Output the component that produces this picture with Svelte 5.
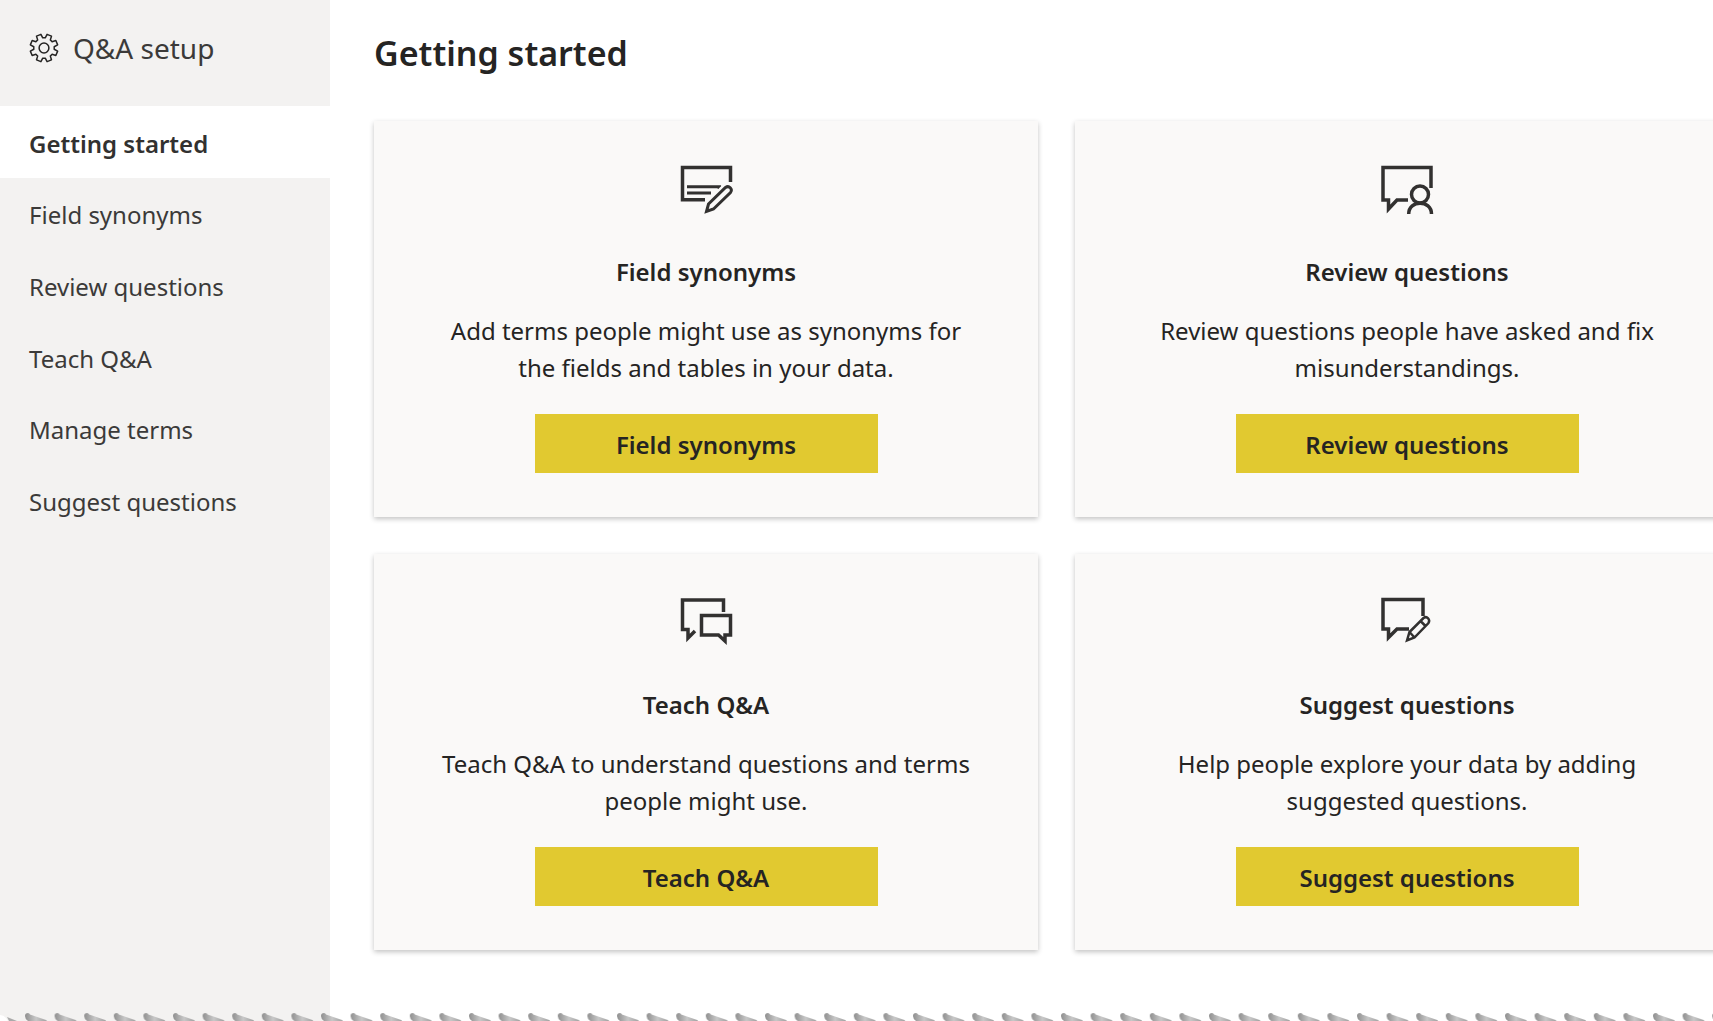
<script>
  const nav = [
    'Getting started',
    'Field synonyms',
    'Review questions',
    'Teach Q&A',
    'Manage terms',
    'Suggest questions'
  ];
  let current = $state('Getting started');

  const cards = [
    { icon: 'fields', title: 'Field synonyms', text: 'Add terms people might use as synonyms for the fields and tables in your data.' },
    { icon: 'review', title: 'Review questions', text: 'Review questions people have asked and fix misunderstandings.' },
    { icon: 'teach', title: 'Teach Q&A', text: 'Teach Q&A to understand questions and terms people might use.' },
    { icon: 'suggest', title: 'Suggest questions', text: 'Help people explore your data by adding suggested questions.' }
  ];

  // Outline of the eight-toothed settings gear, centred on 15,15.
  const gear = (() => {
    const pts = [];
    for (let i = 0; i < 8; i++) {
      const mid = (i * 45 + 22.5) * (Math.PI / 180);
      for (const [offset, r] of [[-0.27, 10.3], [-0.17, 14], [0.17, 14], [0.27, 10.3]]) {
        pts.push(`${(15 + r * Math.cos(mid + offset)).toFixed(2)},${(15 + r * Math.sin(mid + offset)).toFixed(2)}`);
      }
    }
    return pts.join(' ');
  })();
</script>

<div class="page">
  <aside>
    <div class="brand">
      <svg viewBox="0 0 30 30" width="30" height="30" aria-hidden="true">
        <polygon points={gear} />
        <circle cx="15" cy="15" r="4.9" />
      </svg>
      <span>Q&amp;A setup</span>
    </div>
    <nav aria-label="Q&A setup">
      {#each nav as item}
        <a
          href="#{item.toLowerCase().replaceAll(' ', '-')}"
          class:active={item === current}
          aria-current={item === current ? 'page' : undefined}
          onclick={() => (current = item)}>{item}</a>
      {/each}
    </nav>
  </aside>

  <main>
    <h1>Getting started</h1>
    <div class="cards">
      {#each cards as card}
        <section class="card">
          <svg class="icon" viewBox="0 0 54 54" width="54" height="54" aria-hidden="true">
            {#if card.icon === 'fields'}
              <path d="M26 37.700H3.500V5.500H51.500V20" />
              <path d="M8 24.700H42L38.500 26.200M8 31H32" class="line" />
              <path class="gap" d="M27.500 49.500l2-7.500L46.500 25.500c3.500-2.500 7.500 1.500 5 5L34.500 47z" />
              <path class="pen" d="M27.500 49.500l2-7.500L46.500 25.500c3.500-2.500 7.500 1.500 5 5L34.500 47z" />
            {:else if card.icon === 'review'}
              <path d="M51 26V5.500H3V38H8.500V47L17 38H28" />
              <circle cx="40" cy="32.500" r="8.500" />
              <path d="M28.700 52C28.700 37.500 51.500 37.500 51.500 52" />
            {:else if card.icon === 'teach'}
              <path d="M44.500 17V5H3.500V34.500H9V43L16 36" />
              <path d="M22.500 20.500H51.500V40H46V46L39.500 40H22.500Z" />
            {:else}
              <path d="M43 21V4.500H3V34H8.500V42.500L17 34H29" />
              <path class="fine" d="M27 45.500l2.500-8.500L43.500 23c3.500-2.500 7 1.500 5 5L34.500 42.500z M29.500 37L34.500 42.500M40.500 26l5 5" />
            {/if}
          </svg>
          <h2>{card.title}</h2>
          <p>{card.text}</p>
          <button type="button">{card.title}</button>
        </section>
      {/each}
    </div>
  </main>

  <svg class="torn" aria-hidden="true">
    <defs>
      <linearGradient id="curl" x1="0" y1="0" x2="1" y2="0">
        <stop offset="0" stop-color="#8f8f8f" />
        <stop offset="0.5" stop-color="#c8c8c8" />
        <stop offset="1" stop-color="#a0a0a0" />
      </linearGradient>
      <pattern id="tears" x="25" y="0" width="29.6" height="9" patternUnits="userSpaceOnUse">
        <path d="M0 4Q0 1 3 1Q4.500 1 5 2.500L21 8L22 9H3Q0 7 0 4Z" fill="url(#curl)" />
      </pattern>
    </defs>
    <path d="M0 3Q5 3 8 9H0Z" fill="#fff" />
    <path d="M7 5L17 9H9Z" fill="#aaa" />
    <rect x="24" y="0" width="100%" height="9" fill="url(#tears)" />
  </svg>
</div>

<style>
  :global(body) {
    background: #fff;
    overflow: hidden;
  }

  .page {
    position: relative;
    display: grid;
    grid-template-columns: 330px 1fr;
    min-height: 100vh;
    overflow: hidden;
    font-family: 'Segoe UI', 'Noto Sans', sans-serif;
    color: #252423;
  }

  aside {
    background: #f3f2f1;
    color: #3b3a39;
  }

  .brand {
    display: flex;
    align-items: center;
    gap: 14px;
    height: 106px;
    padding: 0 29px 10px;
    box-sizing: border-box;
    font-size: 28px;
  }

  .brand svg {
    fill: none;
    stroke: #252423;
    stroke-width: 1.5;
    stroke-linejoin: round;
  }

  nav {
    display: grid;
    grid-auto-rows: 1fr;
    height: 430px;
  }

  nav a {
    display: flex;
    align-items: center;
    padding: 3px 29px 0;
    font-size: 24px;
    color: inherit;
    text-decoration: none;
  }

  nav a.active {
    background: #fff;
    color: #323130;
    font-weight: 600;
  }

  main {
    min-width: 0;
    padding: 28px 0 64px 44px;
  }

  h1 {
    margin: 0 0 43px;
    font-size: 34px;
    line-height: 50px;
    font-weight: 600;
  }

  .cards {
    display: grid;
    grid-template-columns: repeat(2, minmax(664px, 1fr));
    gap: 37px;
  }

  .card {
    display: flex;
    flex-direction: column;
    align-items: center;
    box-sizing: border-box;
    padding: 41px 60px 44px;
    background: #faf9f8;
    box-shadow: 0 2px 5px rgba(0, 0, 0, 0.24);
    text-align: center;
  }

  .icon {
    fill: none;
    stroke: #323130;
    stroke-width: 3.5;
  }

  .icon .line {
    stroke-width: 3;
  }

  .icon .gap {
    stroke: #faf9f8;
    stroke-width: 8;
  }

  .icon .pen {
    fill: #faf9f8;
    stroke-width: 3;
  }

  .icon .fine {
    stroke-width: 2.5;
  }

  h2 {
    margin: 37px 0 22px;
    font-size: 24px;
    line-height: 37px;
    font-weight: 600;
  }

  p {
    margin: 0 0 28px;
    font-size: 24px;
    line-height: 37px;
  }

  button {
    width: 343px;
    max-width: 100%;
    height: 59px;
    padding: 1px 0 0;
    border: 0;
    background: #e1c930;
    color: #252423;
    font: 600 24px 'Segoe UI', 'Noto Sans', sans-serif;
  }

  .torn {
    position: absolute;
    bottom: 0;
    left: 0;
    width: 100%;
    height: 9px;
  }
</style>
